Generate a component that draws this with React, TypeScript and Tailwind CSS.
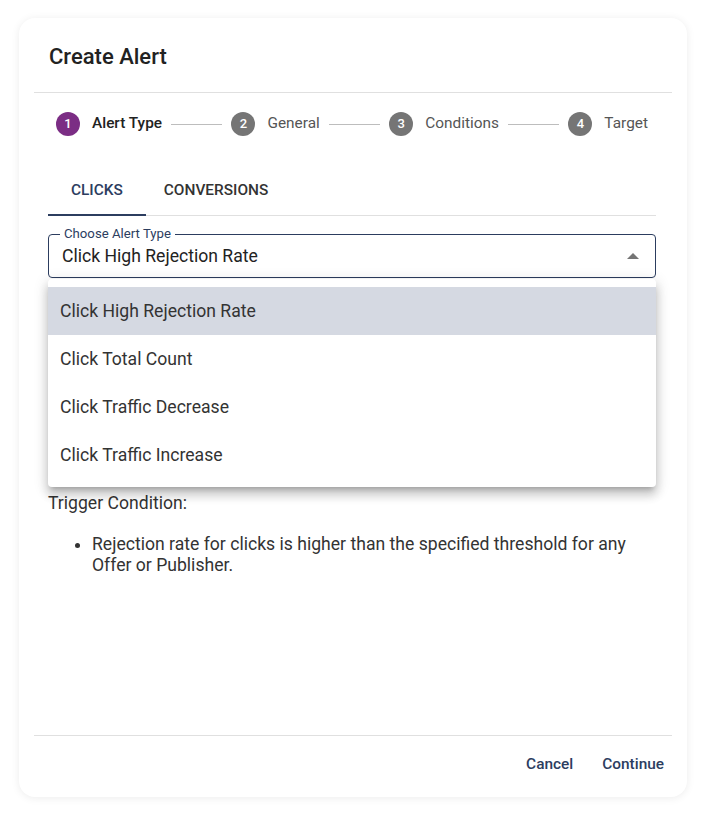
import { Fragment } from "react";

const steps = ["Alert Type", "General", "Conditions", "Target"];
const options = [
  "Click High Rejection Rate",
  "Click Total Count",
  "Click Traffic Decrease",
  "Click Traffic Increase",
];

const Stepper = () => (
  <div className="flex items-center px-2 pt-[19px]">
    {steps.map((label, i) => (
      <Fragment key={label}>
        <div className="flex items-center gap-3">
          <span
            className={`flex h-6 w-6 items-center justify-center rounded-full text-[13px] font-medium text-white ${
              i === 0 ? "bg-[#7b2d84]" : "bg-[#757575]"
            }`}
          >
            {i + 1}
          </span>
          <span
            className={`text-[15.4px] ${i === 0 ? "font-medium text-[#222]" : "text-[#555]"}`}
          >
            {label}
          </span>
        </div>
        {i < steps.length - 1 && <div className="mx-[9px] h-px flex-1 bg-[#bdbdbd]" />}
      </Fragment>
    ))}
  </div>
);

const App = () => {
  return (
    <div className="min-h-screen bg-white pl-[19px] pt-[18px] font-['Roboto',sans-serif]">
      <div className="flex h-[779px] w-[668px] flex-col rounded-2xl bg-white shadow-[0_1px_8px_rgba(0,0,0,0.08)]">
        <div className="px-[30px] pt-[23px] pb-[19px]">
          <h2 className="text-[22px] font-medium leading-8 text-[#222]">Create Alert</h2>
        </div>
        <div className="mx-[15px] h-px bg-[#e0e0e0]" />

        <div className="flex-1 pl-[29px] pr-[31px]">
          <Stepper />

          <div className="mt-[31px] flex border-b border-[#e0e0e0]">
            <div className="relative flex h-12 items-center px-[23px] text-[15.4px] font-medium text-[#2c3d5f]">
              CLICKS
              <span className="absolute -bottom-px left-0 right-0 h-[2px] bg-[#2c3d5f]" />
            </div>
            <div className="flex h-12 items-center px-[18px] text-[15.4px] font-medium text-[#333]">
              CONVERSIONS
            </div>
          </div>

          <div className="relative mt-[18px]">
            <div className="relative flex h-[44px] items-center rounded border border-[#2c3d5f] pl-[13px] pr-4">
              <span className="absolute -top-[9px] left-[11px] bg-white px-[4px] text-[13.2px] leading-4 text-[#2c3d5f]">
                Choose Alert Type
              </span>
              <span className="flex-1 pt-px text-[17.6px] text-[#222]">Click High Rejection Rate</span>
              <svg width="12" height="6" viewBox="0 0 12 6" className="mb-px">
                <path d="M0 6 L6 0 L12 6 Z" fill="#757575" />
              </svg>
            </div>

            <div className="absolute left-0 right-0 top-[45px] z-10 rounded bg-white py-2 shadow-[0_5px_5px_-3px_rgba(0,0,0,0.2),0_8px_10px_1px_rgba(0,0,0,0.14),0_3px_14px_2px_rgba(0,0,0,0.12)]">
              {options.map((o, i) => (
                <div
                  key={o}
                  className={`flex h-12 items-center px-3 text-[17.6px] text-[#333] ${
                    i === 0 ? "bg-[#d5d9e2]" : ""
                  }`}
                >
                  {o}
                </div>
              ))}
            </div>

            <div className="pt-[213px]">
              <p className="text-[17.6px] leading-6 text-[#333]">Trigger Condition:</p>
              <ul className="mt-[19px] list-disc pl-[44px] text-[17.6px] leading-[21px] text-[#333]">
                <li>
                  Rejection rate for clicks is higher than the specified threshold for any Offer or
                  Publisher.
                </li>
              </ul>
            </div>
          </div>
        </div>

        <div className="mx-[15px] h-px bg-[#e0e0e0]" />
        <div className="flex justify-end gap-[13px] px-[15px] pt-[11px] pb-[14px]">
          <button className="h-9 px-2 text-[15.4px] font-medium text-[#2c3d5f]">Cancel</button>
          <button className="h-9 px-2 text-[15.4px] font-medium text-[#2c3d5f]">Continue</button>
        </div>
      </div>
    </div>
  );
};

export default App;
